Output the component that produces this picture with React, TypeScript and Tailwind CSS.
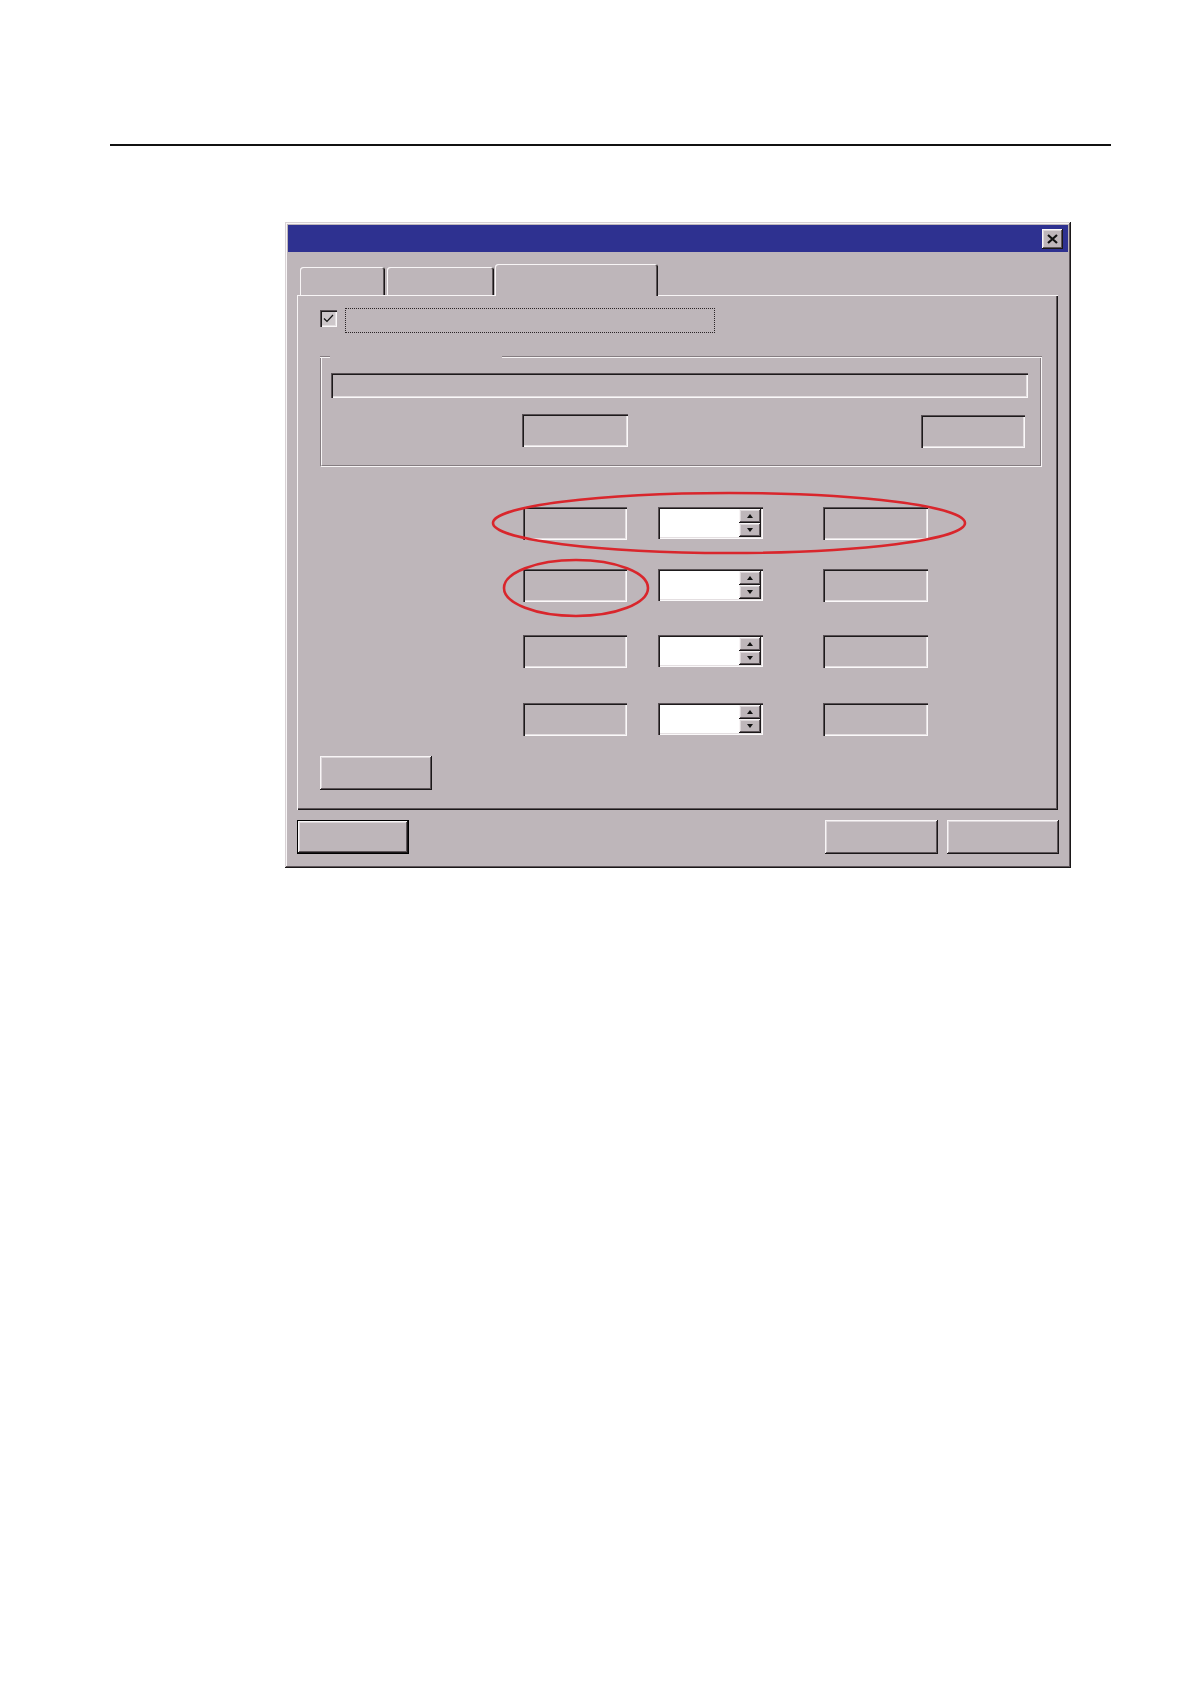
const raised =
  "bg-[#beb6ba] shadow-[inset_-1px_-1px_#1a1718,inset_1px_1px_#f8f5f6,inset_-2px_-2px_#5e565a,inset_2px_2px_#dcd6d9]";
const sunken =
  "shadow-[inset_1px_1px_#5a5256,inset_2px_2px_#1d1a1b,inset_-1px_-1px_#fbf9fa,inset_-2px_-2px_#e4dfe1]";

function Field({ w }: { w: string }) {
  return <div className={`${w} h-[33px] bg-[#beb6ba] ${sunken}`} />;
}

function Spin() {
  return (
    <div className={`w-[105px] h-[32px] bg-white p-[2px] flex ${sunken}`}>
      <div className="flex-1" />
      <div className="w-[22px] flex flex-col">
        <div className={`flex-1 ${raised} flex items-center justify-center`}>
          <svg width="6" height="4" viewBox="0 0 6 4">
            <path d="M3 0 L6 4 L0 4 Z" fill="#111" />
          </svg>
        </div>
        <div className={`flex-1 ${raised} flex items-center justify-center`}>
          <svg width="6" height="4" viewBox="0 0 6 4">
            <path d="M0 0 L6 0 L3 4 Z" fill="#111" />
          </svg>
        </div>
      </div>
    </div>
  );
}

function Tab({ className }: { className: string }) {
  return (
    <div
      className={`bg-[#beb6ba] rounded-t-[3px] shadow-[inset_1px_1px_#f8f5f6,inset_-1px_0_#1a1718,inset_-2px_0_#5e565a] ${className}`}
    />
  );
}

function Row({ className = "" }: { className?: string }) {
  return (
    <div className={`flex ml-[203px] ${className}`}>
      <Field w="w-[104px]" />
      <div className="ml-[31px]">
        <Spin />
      </div>
      <div className="ml-[60px]">
        <Field w="w-[105px]" />
      </div>
    </div>
  );
}

export default function App() {
  return (
    <div className="min-h-[1684px] w-[1190px] bg-white pt-[144px] font-['Liberation_Sans',sans-serif]">
      {/* page rule */}
      <div className="ml-[110px] w-[1001px] h-[2px] bg-[#111]" />

      {/* dialog */}
      <div className="mt-[76px] ml-[285px] w-[786px] h-[646px] bg-[#beb6ba] p-[3px] flex flex-col shadow-[inset_-1px_-1px_#1a1718,inset_1px_1px_#d8d2d5,inset_-2px_-2px_#5e565a,inset_2px_2px_#f8f5f6]">
        {/* title bar */}
        <div className="h-[27px] bg-[#2e3190] flex items-center justify-end pr-[5px]">
          <div className={`w-[21px] h-[20px] ${raised} flex items-center justify-center`}>
            <svg width="11" height="10" viewBox="0 0 11 10">
              <path d="M1 1 L10 9 M10 1 L1 9" stroke="#111" strokeWidth="2.2" />
            </svg>
          </div>
        </div>

        <div className="flex flex-col pl-[9px]">
          {/* tabs */}
          <div className="mt-[12px] h-[32px] -mb-[1px] flex items-end pl-[3px] relative z-10">
            <Tab className="w-[85px] h-[28px] mb-[1px]" />
            <Tab className="ml-[2px] w-[107px] h-[28px] mb-[1px]" />
            <Tab className="ml-[1px] w-[163px] h-[32px]" />
          </div>

          {/* tab panel */}
          <div className="relative w-[761px] h-[515px] bg-[#beb6ba] pl-[23px] pt-[13px] shadow-[inset_1px_1px_#f8f5f6,inset_-1px_-1px_#1a1718,inset_-2px_-2px_#5e565a]">
            <div className="flex items-start">
              <div className={`mt-[2px] w-[17px] h-[17px] bg-[#cdc7ca] flex items-center justify-center ${sunken}`}>
                <svg width="11" height="9" viewBox="0 0 11 9">
                  <path d="M1 4.5 L4 7.5 L10 1" stroke="#111" strokeWidth="1.2" fill="none" />
                </svg>
              </div>
              <div className="ml-[8px] w-[370px] h-[25px] border border-dotted border-[#2a2426]" />
            </div>

            {/* group box */}
            <div className="mt-[23px] w-[722px] h-[111px] flex flex-col">
              <div className="flex h-[2px]">
                <div className="w-[10px] border-t border-t-[#857d81] border-b border-b-[#f8f5f6]" />
                <div className="w-[172px]" />
                <div className="flex-1 border-t border-t-[#857d81] border-b border-b-[#f8f5f6]" />
              </div>
              <div className="flex-1 border-l border-l-[#857d81] border-r border-r-[#f8f5f6] border-b border-b-[#f8f5f6]">
                <div className="h-full border-l border-l-[#f8f5f6] border-r border-r-[#857d81] border-b border-b-[#857d81] pl-[9px] pt-[15px]">
                  <div className={`w-[697px] h-[25px] ${sunken}`} />
                  <div className="mt-[16px] flex">
                    <div className="ml-[191px]">
                      <Field w="w-[106px]" />
                    </div>
                    <div className="ml-[293px] mt-[1px]">
                      <Field w="w-[104px]" />
                    </div>
                  </div>
                </div>
              </div>
            </div>

            {/* rows */}
            <Row className="mt-[40px]" />
            <Row className="mt-[29px]" />
            <Row className="mt-[33px]" />
            <Row className="mt-[35px]" />

            <div className={`mt-[20px] w-[112px] h-[34px] ${raised}`} />

            {/* red markings */}
            <svg className="absolute inset-0 pointer-events-none" width="761" height="515">
              <ellipse cx="432" cy="228" rx="236" ry="30" fill="none" stroke="#d9262c" strokeWidth="2.6" />
              <ellipse cx="279" cy="293" rx="72" ry="28" fill="none" stroke="#d9262c" strokeWidth="2.6" />
            </svg>
          </div>

          {/* bottom buttons */}
          <div className="mt-[10px] flex">
            <div className={`w-[112px] h-[34px] border border-black ${raised}`} />
            <div className={`ml-[416px] w-[113px] h-[34px] ${raised}`} />
            <div className={`ml-[9px] w-[112px] h-[34px] ${raised}`} />
          </div>
        </div>
      </div>
    </div>
  );
}
